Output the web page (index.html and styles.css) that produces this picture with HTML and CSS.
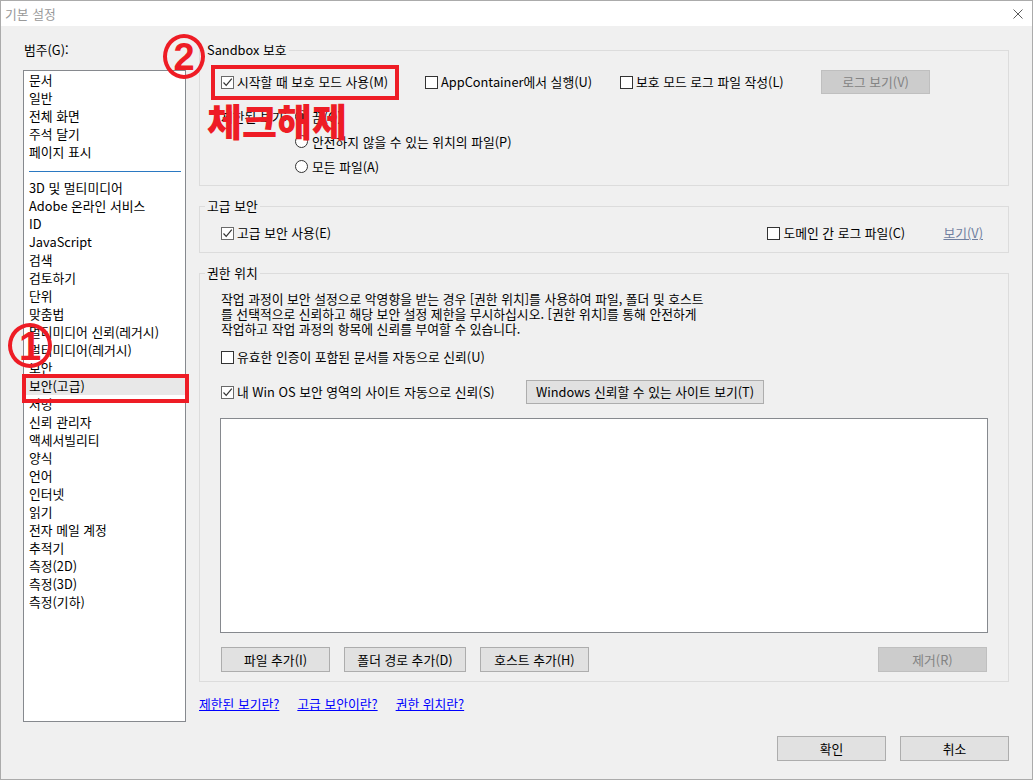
FILE: index.html
```html
<!DOCTYPE html>
<html lang="ko">
<head>
<meta charset="utf-8">
<title>기본 설정</title>
<link rel="stylesheet" href="styles.css">
</head>
<body>
<div class="window">
  <div class="titlebar">
    <span class="title">기본 설정</span>
    <svg class="close" width="10" height="10" viewBox="0 0 10 10"><path d="M0.5 0.5L9.5 9.5M9.5 0.5L0.5 9.5" stroke="#5a5a5a" stroke-width="1" fill="none"/></svg>
  </div>
  <div class="body">
    <div class="left">
      <div class="cat-label">범주(G):</div>
      <ul class="cat-list">
        <li>문서</li>
        <li>일반</li>
        <li>전체 화면</li>
        <li>주석 달기</li>
        <li>페이지 표시</li>
        <li class="sep"></li>
        <li>3D 및 멀티미디어</li>
        <li>Adobe 온라인 서비스</li>
        <li>ID</li>
        <li>JavaScript</li>
        <li>검색</li>
        <li>검토하기</li>
        <li>단위</li>
        <li>맞춤법</li>
        <li>멀티미디어 신뢰(레거시)</li>
        <li>멀티미디어(레거시)</li>
        <li>보안</li>
        <li class="sel">보안(고급)</li>
        <li>서명</li>
        <li>신뢰 관리자</li>
        <li>액세서빌리티</li>
        <li>양식</li>
        <li>언어</li>
        <li>인터넷</li>
        <li>읽기</li>
        <li>전자 메일 계정</li>
        <li>추적기</li>
        <li>측정(2D)</li>
        <li>측정(3D)</li>
        <li>측정(기하)</li>
      </ul>
    </div>
    <div class="right">
      <fieldset class="group sandbox">
        <legend>Sandbox 보호</legend>
        <div class="sb-row">
          <label class="cb w1"><span class="box on"><svg width="11" height="11" viewBox="0 0 11 11"><path d="M1.5 5.5L4.2 8.3L9.8 1.6" fill="none" stroke="#333" stroke-width="1.2"/></svg></span>시작할 때 보호 모드 사용(M)</label>
          <label class="cb w2"><span class="box"></span>AppContainer에서 실행(U)</label>
          <label class="cb w3"><span class="box"></span>보호 모드 로그 파일 작성(L)</label>
          <button class="btn dis log">로그 보기(V)</button>
        </div>
        <div class="restricted">
          <div class="r-label">제한된 보기:</div>
          <div class="radios">
            <label class="rd"><span class="circle on"></span>끔(O)</label>
            <label class="rd"><span class="circle"></span>안전하지 않을 수 있는 위치의 파일(P)</label>
            <label class="rd"><span class="circle"></span>모든 파일(A)</label>
          </div>
        </div>
      </fieldset>

      <fieldset class="group adv">
        <legend>고급 보안</legend>
        <div class="adv-row">
          <label class="cb"><span class="box on"><svg width="11" height="11" viewBox="0 0 11 11"><path d="M1.5 5.5L4.2 8.3L9.8 1.6" fill="none" stroke="#333" stroke-width="1.2"/></svg></span>고급 보안 사용(E)</label>
          <label class="cb domain"><span class="box"></span>도메인 간 로그 파일(C)</label>
          <span class="dis-link">보기(V)</span>
        </div>
      </fieldset>

      <fieldset class="group priv">
        <legend>권한 위치</legend>
        <p class="para">작업 과정이 보안 설정으로 악영향을 받는 경우 [권한 위치]를 사용하여 파일, 폴더 및 호스트<br>를 선택적으로 신뢰하고 해당 보안 설정 제한을 무시하십시오. [권한 위치]를 통해 안전하게<br>작업하고 작업 과정의 항목에 신뢰를 부여할 수 있습니다.</p>
        <div class="p-row1">
          <label class="cb"><span class="box"></span>유효한 인증이 포함된 문서를 자동으로 신뢰(U)</label>
        </div>
        <div class="p-row2">
          <label class="cb winos"><span class="box on"><svg width="11" height="11" viewBox="0 0 11 11"><path d="M1.5 5.5L4.2 8.3L9.8 1.6" fill="none" stroke="#333" stroke-width="1.2"/></svg></span>내 Win OS 보안 영역의 사이트 자동으로 신뢰(S)</label>
          <button class="btn wsite">Windows 신뢰할 수 있는 사이트 보기(T)</button>
        </div>
        <div class="listbox"></div>
        <div class="btn-row">
          <button class="btn b109">파일 추가(I)</button>
          <button class="btn b122">폴더 경로 추가(D)</button>
          <button class="btn b109">호스트 추가(H)</button>
          <button class="btn dis b109 remove">제거(R)</button>
        </div>
      </fieldset>

      <div class="links">
        <a href="#">제한된 보기란?</a>
        <a href="#">고급 보안이란?</a>
        <a href="#">권한 위치란?</a>
      </div>

      <div class="ok-row">
        <button class="btn b109">확인</button>
        <button class="btn b109">취소</button>
      </div>
    </div>
  </div>

  <div class="anno-box box2"></div>
  <div class="anno-box box1"></div>
  <div class="anno-circle c1">1</div>
  <div class="anno-circle c2">2</div>
  <div class="anno-text">체크해제</div>
</div>
</body>
</html>
```

FILE: styles.css
```css
* { box-sizing: border-box; }

body {
  margin: 0;
  font-family: "Noto Sans CJK KR", sans-serif;
  font-size: 12.8px;
  color: #000;
  background: #f0f0f0;
}

.window {
  position: relative;
  width: 1033px;
  height: 780px;
  border: 1px solid #ababab;
  background: #f0f0f0;
  overflow: hidden;
}

.titlebar {
  height: 25px;
  background: #fff;
  display: flex;
  align-items: center;
  padding-left: 4px;
}

.title {
  color: #999;
  line-height: 16px;
}

.close {
  margin-left: auto;
  margin-right: 9px;
}

.body {
  display: flex;
  gap: 13px;
  padding: 16px 0 0 22px;
}

.left {
  width: 163px;
  flex: none;
}

.cat-label {
  line-height: 16px;
  margin-bottom: 12px;
  padding-left: 1px;
}

.cat-list {
  list-style: none;
  margin: 0;
  padding: 0;
  height: 652px;
  background: #fff;
  border: 1px solid #86898e;
}

.cat-list li {
  height: 18px;
  line-height: 18px;
  padding-left: 5px;
  white-space: nowrap;
}

.cat-list li.sel {
  background: #e8e8e8;
}

.cat-list li.sep {
  padding: 10px 4px 0 5px;
}

.cat-list li.sep::before {
  content: "";
  display: block;
  height: 1px;
  background: #2b79c2;
}

.right {
  width: 810px;
  flex: none;
  display: flex;
  flex-direction: column;
}

fieldset.group {
  margin: 0;
  min-width: 0;
  border: 1px solid #dcdcdc;
}

legend {
  margin-left: -16px;
  padding: 0 2px;
  line-height: 16px;
}

.sandbox {
  padding: 12px 0 6px 21px;
}

.adv {
  margin-top: 12px !important;
  padding: 10px 25px 10px 21px;
}

.priv {
  margin-top: 12px !important;
  padding: 10px 21px 9px 21px;
}

.cb {
  display: inline-flex;
  align-items: center;
  gap: 3px;
  line-height: 18px;
  white-space: nowrap;
}

.box {
  width: 13px;
  height: 13px;
  flex: none;
  border: 1px solid #333;
  background: #fff;
  display: flex;
}

.box.on {
  border-color: #6a6a6a;
}

.sb-row {
  display: flex;
  align-items: center;
  height: 24px;
}

.w1 { width: 204px; }
.w2 { width: 195px; }
.w3 { width: 201px; }

.btn {
  font-family: inherit;
  font-size: 12.8px;
  color: #000;
  height: 25px;
  padding: 0;
  margin: 0;
  border: 1px solid #adadad;
  background: #e1e1e1;
  display: flex;
  align-items: center;
  justify-content: center;
  line-height: 16px;
  white-space: nowrap;
}

.btn.dis {
  background: #cccccc;
  border-color: #bfbfbf;
  color: #838383;
}

.log {
  width: 109px;
  height: 24px;
}

.restricted {
  display: flex;
  margin-top: 10px;
}

.r-label {
  width: 74px;
  line-height: 25px;
}

.radios {
  display: flex;
  flex-direction: column;
}

.rd {
  display: flex;
  align-items: center;
  gap: 4px;
  height: 25px;
  white-space: nowrap;
}

.circle {
  width: 13px;
  height: 13px;
  flex: none;
  border: 1px solid #333;
  border-radius: 50%;
  background: #fff;
  display: flex;
  align-items: center;
  justify-content: center;
}

.circle.on::after {
  content: "";
  width: 7px;
  height: 7px;
  border-radius: 50%;
  background: #333;
}

.adv-row {
  display: flex;
  align-items: center;
  height: 18px;
}

.domain {
  margin-left: auto;
  width: 176px;
}

.dis-link {
  color: #7080a0;
  text-decoration: underline;
  line-height: 18px;
}

.para {
  margin: 0;
  line-height: 15px;
}

.p-row1 {
  margin-top: 12px;
  height: 18px;
  display: flex;
  align-items: center;
}

.p-row2 {
  margin-top: 14px;
  height: 24px;
  display: flex;
  align-items: center;
}

.winos {
  width: 305px;
}

.wsite {
  width: 238px;
  height: 24px;
}

.listbox {
  margin-top: 14px;
  margin-left: -1px;
  width: 768px;
  height: 215px;
  background: #fff;
  border: 1px solid #86898e;
}

.btn-row {
  margin-top: 14px;
  display: flex;
  gap: 14px;
}

.b109 { width: 109px; }
.b122 { width: 122px; }

.remove {
  margin-left: auto;
}

.links {
  margin-top: 14px;
  display: flex;
  gap: 18px;
  line-height: 16px;
}

.links a {
  color: #0000ff;
  text-decoration: underline;
}

.ok-row {
  margin-top: 24px;
  display: flex;
  justify-content: flex-end;
  gap: 14px;
}

/* annotations drawn over the dialog */
.anno-box {
  position: absolute;
  border: 4px solid #ee1c25;
}

.box2 {
  left: 210px;
  top: 64px;
  width: 188px;
  height: 35px;
}

.box1 {
  left: 21px;
  top: 373px;
  width: 167px;
  height: 29px;
}

.anno-circle {
  position: absolute;
  border: 4px solid #ee1c25;
  border-radius: 50%;
  color: #ee1c25;
  font-family: "Liberation Sans", sans-serif;
  font-weight: 700;
  display: flex;
  align-items: center;
  justify-content: center;
  line-height: 1;
}

.c1 {
  left: 7px;
  top: 322px;
  width: 44px;
  height: 45px;
  font-size: 40px;
}

.c2 {
  left: 162px;
  top: 33px;
  width: 42px;
  height: 45px;
  font-size: 38px;
}

.anno-text {
  position: absolute;
  left: 206px;
  top: 100px;
  font-family: "Noto Sans CJK KR", sans-serif;
  font-weight: 900;
  font-size: 38px;
  line-height: 1;
  letter-spacing: 0;
  color: #ee1c25;
  white-space: nowrap;
}
```
